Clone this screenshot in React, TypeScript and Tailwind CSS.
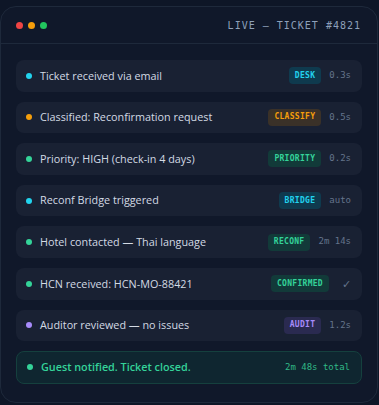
import React from "react";

type Row = {
  text: string;
  dot: string;
  badge: string;
  badgeCls: string;
  time: string;
};

const rows: Row[] = [
  { text: "Ticket received via email", dot: "bg-[#22d3ee]", badge: "DESK", badgeCls: "bg-[#0f3a4e] text-[#22d3ee]", time: "0.3s" },
  { text: "Classified: Reconfirmation request", dot: "bg-[#f59e0b]", badge: "CLASSIFY", badgeCls: "bg-[#3a3128] text-[#f59e0b]", time: "0.5s" },
  { text: "Priority: HIGH (check-in 4 days)", dot: "bg-[#34d399]", badge: "PRIORITY", badgeCls: "bg-[#123a39] text-[#34d399]", time: "0.2s" },
  { text: "Reconf Bridge triggered", dot: "bg-[#22d3ee]", badge: "BRIDGE", badgeCls: "bg-[#0f3a4e] text-[#22d3ee]", time: "auto" },
  { text: "Hotel contacted — Thai language", dot: "bg-[#34d399]", badge: "RECONF", badgeCls: "bg-[#123a39] text-[#34d399]", time: "2m 14s" },
  { text: "HCN received: HCN-MO-88421", dot: "bg-[#34d399]", badge: "CONFIRMED", badgeCls: "bg-[#123a39] text-[#34d399]", time: "✓" },
  { text: "Auditor reviewed — no issues", dot: "bg-[#a78bfa]", badge: "AUDIT", badgeCls: "bg-[#2a2a50] text-[#a78bfa]", time: "1.2s" },
];

const mono = { fontFamily: '"DejaVu Sans Mono", "Liberation Mono", monospace' };
const sans = { fontFamily: '"Open Sans", "Noto Sans", sans-serif' };

export default function App() {
  return (
    <div className="w-[379px] h-[405px] bg-[#0e1627] pt-[6px] overflow-hidden">
      <div className="w-[378px] h-[397px] rounded-2xl border border-[#1e293b] bg-[#10182a] flex flex-col">
        <div className="h-[37px] flex items-center justify-between pl-[15px] pr-[16px] border-b border-[#1e293b]">
          <div className="flex items-center gap-[5px]">
            <span className="w-[7px] h-[7px] rounded-full bg-[#ef4444]" />
            <span className="w-[7px] h-[7px] rounded-full bg-[#f59e0b]" />
            <span className="w-[7px] h-[7px] rounded-full bg-[#22c55e]" />
          </div>
          <span className="text-[10px] tracking-[1px] text-[#8ea0ba]" style={mono}>
            LIVE — TICKET #4821
          </span>
        </div>
        <div className="flex flex-col gap-[10px] px-[15px] pt-[16px]">
          {rows.map((r) => (
            <div
              key={r.text}
              className="h-[31.6px] rounded-lg bg-[#192133] flex items-center pl-[10px] pr-[11px]"
            >
              <span className={`w-[6px] h-[6px] rounded-full ${r.dot}`} />
              <span className="ml-2 text-[10.8px] text-[#d3dae4] flex-1" style={sans}>
                {r.text}
              </span>
              <span
                className={`h-[17px] flex items-center px-[6px] rounded text-[8px] font-bold tracking-[0.3px] ${r.badgeCls}`}
                style={mono}
              >
                {r.badge}
              </span>
              {r.time === "✓" ? (
                <span className="ml-2 w-[14px] text-right text-[11px] leading-none text-[#64748b]" style={sans}>
                  ✓
                </span>
              ) : (
                <span className="ml-2 text-[9px] text-[#64748b]" style={mono}>
                  {r.time}
                </span>
              )}
            </div>
          ))}
          <div className="h-[32.5px] rounded-lg bg-[#0f2630] border border-[#15403e] flex items-center pl-[10px] pr-[11px]">
            <span className="w-[6px] h-[6px] rounded-full bg-[#34d399]" />
            <span className="ml-2 text-[10.8px] font-semibold text-[#34d399] flex-1" style={sans}>
              Guest notified. Ticket closed.
            </span>
            <span className="text-[9px] text-[#2fb886]" style={mono}>
              2m 48s total
            </span>
          </div>
        </div>
      </div>
    </div>
  );
}
